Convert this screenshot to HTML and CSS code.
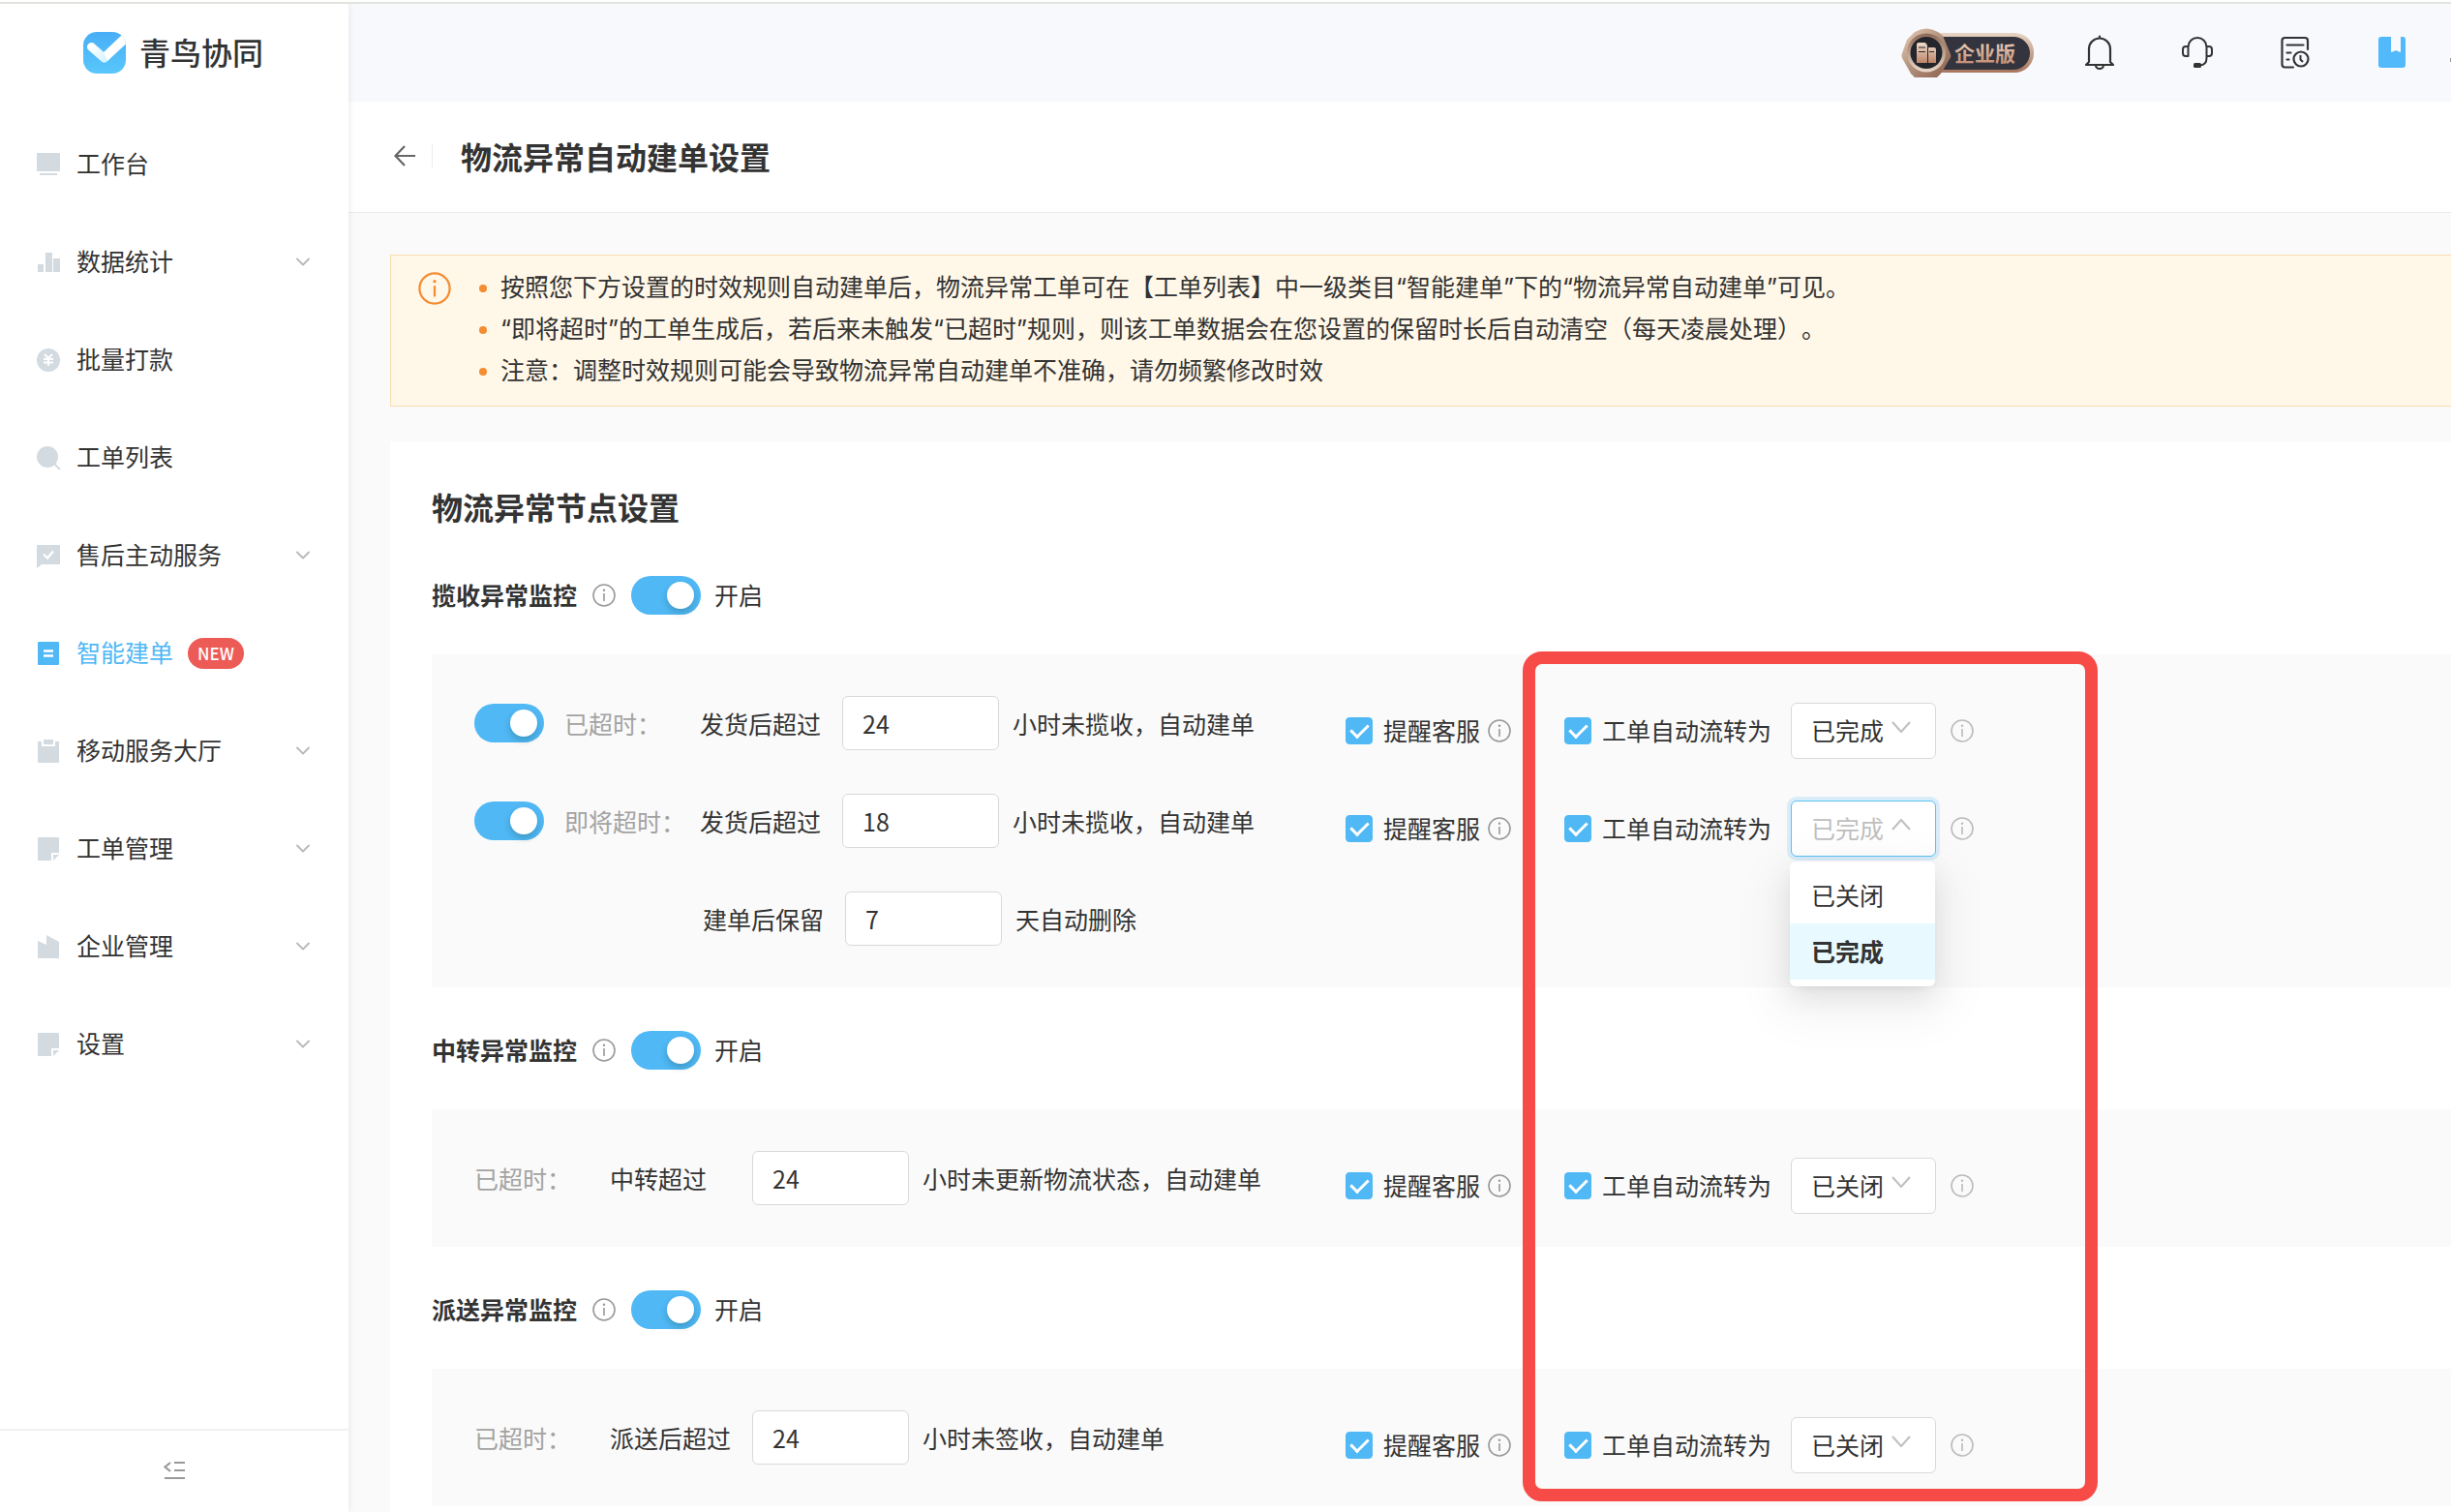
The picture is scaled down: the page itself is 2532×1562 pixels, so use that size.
FILE: index.html
```html
<!DOCTYPE html>
<html lang="zh-CN">
<head>
<meta charset="utf-8">
<meta name="viewport" content="width=device-width, initial-scale=1">
<title>物流异常自动建单设置 - 青鸟协同</title>
<link rel="stylesheet" href="styles.css">
</head>
<body>
<svg class="sprite" aria-hidden="true">
  <symbol id="i-info" viewBox="0 0 24 24">
    <circle cx="12" cy="12" r="11" fill="none" stroke="currentColor" stroke-width="1.6"/>
    <path d="M12 10v8" fill="none" stroke="currentColor" stroke-width="1.6"/>
    <circle cx="12" cy="6.8" r="1.2" fill="currentColor"/>
  </symbol>
  <symbol id="i-down" viewBox="0 0 14 9">
    <path d="M1 1.5l6 6 6-6" fill="none" stroke="currentColor" stroke-width="1.8" stroke-linecap="round" stroke-linejoin="round"/>
  </symbol>
  <symbol id="i-arrow" viewBox="0 0 20 12">
    <path d="M1 1l9 10 9-10" fill="none" stroke="currentColor" stroke-width="2"/>
  </symbol>
  <symbol id="i-note" viewBox="0 0 26 26">
    <path fill="currentColor" d="M3 1h20a1 1 0 0 1 1 1v15h-8v8H3a1 1 0 0 1-1-1V2a1 1 0 0 1 1-1zM18 19h6l-6 6z"/>
  </symbol>
</svg>
<div class="edge"></div>
<div class="app">
  <aside class="sidebar">
    <div class="brand">
      <svg class="brand-mark" viewBox="0 0 44 43" aria-hidden="true">
        <defs>
          <linearGradient id="g-mark" x1="0" y1="0" x2="0" y2="1"><stop offset="0" stop-color="#48aef7"/><stop offset="1" stop-color="#59c7fb"/></linearGradient>
          <linearGradient id="g-tick" gradientUnits="userSpaceOnUse" x1="8" y1="14" x2="24" y2="30"><stop offset="0" stop-color="#fff"/><stop offset="1" stop-color="#d4f2fe"/></linearGradient>
          <clipPath id="c-mark"><rect width="44" height="43" rx="14"/></clipPath>
        </defs>
        <g clip-path="url(#c-mark)">
          <rect width="44" height="43" fill="url(#g-mark)"/>
          <path d="M8.500 15.500L21.500 27l2-2" fill="none" stroke="url(#g-tick)" stroke-width="9" stroke-linecap="round" stroke-linejoin="round"/>
          <path d="M21 21L42 1l8 6-25 23z" fill="#fff"/>
        </g>
      </svg>
      <span class="brand-name">青鸟协同</span>
    </div>
    <nav class="nav">
      <a class="nav-item" href="#"><svg class="nav-icon" viewBox="0 0 26 26"><path fill="currentColor" d="M1 1h24v19H1zM4 22h18v2H4z"/></svg><span>工作台</span></a>
      <a class="nav-item" href="#"><svg class="nav-icon" viewBox="0 0 26 26"><path fill="currentColor" d="M2 15h6v8H2zM10 3h7v20h-7zM18 9h7v14h-7z"/></svg><span>数据统计</span><svg class="nav-chev"><use href="#i-down"/></svg></a>
      <a class="nav-item" href="#"><svg class="nav-icon" viewBox="0 0 26 26"><circle cx="13" cy="13" r="12" fill="currentColor"/><path d="M9 7l4 4 4-4M8 12h10M8 15.500h10M13 11v8" fill="none" stroke="#fff" stroke-width="2"/></svg><span>批量打款</span></a>
      <a class="nav-item" href="#"><svg class="nav-icon" viewBox="0 0 26 26"><circle cx="12" cy="12" r="11" fill="currentColor"/><path d="M18 18l7 7" stroke="currentColor" stroke-width="2"/></svg><span>工单列表</span></a>
      <a class="nav-item" href="#"><svg class="nav-icon" viewBox="0 0 26 26"><path fill="currentColor" d="M1 2h24v20H6l-5 4z"/><path d="M8 11.500l4 4 6-7" fill="none" stroke="#fff" stroke-width="2.400"/></svg><span>售后主动服务</span><svg class="nav-chev"><use href="#i-down"/></svg></a>
      <a class="nav-item is-active" href="#" aria-current="page"><svg class="nav-icon" viewBox="0 0 26 26"><rect x="2" y="1" width="22" height="24" rx="1" fill="currentColor"/><path d="M8 10.500h10M8 15.500h10" stroke="#fff" stroke-width="2.400"/></svg><span>智能建单</span><em class="tag">NEW</em></a>
      <a class="nav-item" href="#"><svg class="nav-icon" viewBox="0 0 26 26"><path fill="currentColor" d="M2 3h4v5h14V3h4v22H2zM8 1h10v5H8z"/></svg><span>移动服务大厅</span><svg class="nav-chev"><use href="#i-down"/></svg></a>
      <a class="nav-item" href="#"><svg class="nav-icon"><use href="#i-note"/></svg><span>工单管理</span><svg class="nav-chev"><use href="#i-down"/></svg></a>
      <a class="nav-item" href="#"><svg class="nav-icon" viewBox="0 0 26 26"><path fill="currentColor" d="M2 7l9 4V1l13 7v17H2z"/></svg><span>企业管理</span><svg class="nav-chev"><use href="#i-down"/></svg></a>
      <a class="nav-item" href="#"><svg class="nav-icon"><use href="#i-note"/></svg><span>设置</span><svg class="nav-chev"><use href="#i-down"/></svg></a>
    </nav>
    <button class="collapse" type="button" aria-label="收起菜单">
      <svg viewBox="0 0 24 20"><path d="M8 2L2.500 6.500 8 11M12 2h11M12 10h11M2 18h21" fill="none" stroke="currentColor" stroke-width="2.200"/></svg>
    </button>
  </aside>

  <div class="main">
    <header class="topbar">
      <a class="edition" href="#" aria-label="企业版">
        <svg viewBox="0 0 138 51">
          <defs>
            <linearGradient id="g-rim" x1="0" y1="0" x2="0" y2="1"><stop offset="0" stop-color="#e6d4c4"/><stop offset="1" stop-color="#a8755c"/></linearGradient>
            <linearGradient id="g-hex" x1="0" y1="0" x2="1" y2="1"><stop offset="0" stop-color="#e8cdb8"/><stop offset=".5" stop-color="#b08f7a"/><stop offset="1" stop-color="#8a5f4a"/></linearGradient>
            <linearGradient id="g-ring" x1="0" y1="0" x2="0" y2="1"><stop offset="0" stop-color="#8d6a57"/><stop offset="1" stop-color="#ead9cb"/></linearGradient>
            <linearGradient id="g-ink" x1="0" y1="0" x2="0" y2="1"><stop offset="0" stop-color="#f0dccb"/><stop offset="1" stop-color="#bd8468"/></linearGradient>
          </defs>
          <rect x="20" y="5" width="117" height="41" rx="20" fill="url(#g-rim)"/>
          <rect x="20" y="9" width="113" height="34" rx="17" fill="#34343e"/>
          <path d="M14 4q12-7 24 0l5 4 8 19q1 3-1 5l-9 15-4 4H14l-4-4L1 31q-1-2 0-5l5-14z" fill="url(#g-hex)"/>
          <circle cx="26" cy="25.500" r="20" fill="url(#g-ring)"/>
          <circle cx="26" cy="25.500" r="16.500" fill="#25252c"/>
          <path d="M16 36V17q0-2 2-2h6q2 0 3 3v18zM28 36V20h6q2 0 2 2v14z" fill="url(#g-ink)"/>
          <path d="M18 20h7M18 24.500h7M29 24.500h5" stroke="#25252c" stroke-width="1.200"/>
          <text class="edition-text" x="55" y="34" fill="url(#g-ink)">企业版</text>
        </svg>
      </a>
      <div class="tools">
        <button class="tool" type="button" aria-label="通知"><svg viewBox="0 0 34 36"><path d="M17 1.500v2M6 28V14.500a11 11 0 0 1 22 0V28l3 3H3zM13 31.500a4 3.500 0 0 0 8 0" fill="none" stroke="currentColor" stroke-width="2.200" stroke-linejoin="round" stroke-linecap="round"/></svg></button>
        <button class="tool" type="button" aria-label="客服"><svg viewBox="0 0 34 36"><path d="M7.500 22V12.500a9.500 9.500 0 0 1 19 0V24q0 7-7 7.500M7.500 12H5q-3 0-3 3v4q0 3 3 3h2.500zM26.500 12H29q3 0 3 3v4q0 3-3 3h-2.500z" fill="none" stroke="currentColor" stroke-width="2" stroke-linejoin="round"/><rect x="13" y="29" width="8" height="5" rx="1.500" fill="currentColor"/></svg></button>
        <button class="tool" type="button" aria-label="工单记录"><svg viewBox="0 0 34 36"><path d="M15 33.500H6.500q-3 0-3-3V6q0-3 3-3H27q3 0 3 3v9M8.500 10.500h17M8.500 18.500h4M8.500 25.500h2" fill="none" stroke="currentColor" stroke-width="2.200" stroke-linecap="round"/><circle cx="23" cy="25" r="7.500" fill="none" stroke="currentColor" stroke-width="2.200"/><path d="M22.500 21v4.500l2.500 2.500" fill="none" stroke="currentColor" stroke-width="2"/></svg></button>
        <button class="tool is-blue" type="button" aria-label="帮助手册"><svg viewBox="0 0 34 36"><path fill="currentColor" d="M5 2h10v16l3-1 2-1 2 1 3 1V2h2q3 0 3 3v26q0 3-3 3H5q-3 0-3-3V5q0-3 3-3z"/></svg></button>
        <button class="tool-cut" type="button" aria-label="账号"><svg viewBox="0 0 10 36"><path d="M9.500 24v4" fill="none" stroke="#999" stroke-width="1"/></svg></button>
      </div>
    </header>

    <div class="page-head">
      <a class="back" href="#" aria-label="返回"><svg viewBox="0 0 24 24"><path d="M12 2L2.500 12l9.500 10M2.500 12H23" fill="none" stroke="currentColor" stroke-width="2.200"/></svg></a>
      <h1 class="title">物流异常自动建单设置</h1>
    </div>

    <main class="content">
      <div class="alert" role="note">
        <svg class="alert-icon"><use href="#i-info"/></svg>
        <ul class="alert-list">
          <li>按照您下方设置的时效规则自动建单后，物流异常工单可在【工单列表】中一级类目“智能建单”下的“物流异常自动建单”可见。</li>
          <li>“即将超时”的工单生成后，若后来未触发“已超时”规则，则该工单数据会在您设置的保留时长后自动清空（每天凌晨处理）。</li>
          <li>注意：调整时效规则可能会导致物流异常自动建单不准确，请勿频繁修改时效</li>
        </ul>
      </div>

      <section class="card">
        <h2 class="card-title">物流异常节点设置</h2>

        <div class="group-head">
          <strong>揽收异常监控</strong>
          <svg class="info"><use href="#i-info"/></svg>
          <input class="switch" type="checkbox" role="switch" id="sw-collect" checked>
          <label for="sw-collect">开启</label>
        </div>
        <div class="panel">
          <div class="row">
            <div class="rule">
              <input class="switch" type="checkbox" role="switch" id="sw-c1" checked>
              <label class="state" for="sw-c1">已超时：</label>
              <label class="lead" for="h-c1">发货后超过</label>
              <input class="num" type="text" id="h-c1" value="24">
              <span>小时未揽收，自动建单</span>
            </div>
            <div class="opt"><input class="check" type="checkbox" id="r-c1" checked><label for="r-c1">提醒客服</label><svg class="info"><use href="#i-info"/></svg></div>
            <div class="opt"><input class="check" type="checkbox" id="f-c1" checked><label for="f-c1">工单自动流转为</label>
              <div class="picker"><select aria-label="流转状态"><option>已关闭</option><option selected>已完成</option></select><svg class="picker-arrow"><use href="#i-arrow"/></svg></div>
              <svg class="info is-light"><use href="#i-info"/></svg></div>
          </div>
          <div class="row">
            <div class="rule">
              <input class="switch" type="checkbox" role="switch" id="sw-c2" checked>
              <label class="state" for="sw-c2">即将超时：</label>
              <label class="lead" for="h-c2">发货后超过</label>
              <input class="num" type="text" id="h-c2" value="18">
              <span>小时未揽收，自动建单</span>
            </div>
            <div class="opt"><input class="check" type="checkbox" id="r-c2" checked><label for="r-c2">提醒客服</label><svg class="info"><use href="#i-info"/></svg></div>
            <div class="opt"><input class="check" type="checkbox" id="f-c2" checked><label for="f-c2">工单自动流转为</label>
              <div class="picker is-open"><select aria-label="流转状态"><option>已关闭</option><option selected>已完成</option></select><svg class="picker-arrow"><use href="#i-arrow"/></svg>
                <ul class="menu" role="listbox"><li role="option">已关闭</li><li role="option" aria-selected="true">已完成</li></ul>
              </div>
              <svg class="info is-light"><use href="#i-info"/></svg></div>
          </div>
          <div class="row">
            <div class="rule is-sub">
              <label class="lead" for="d-c3">建单后保留</label>
              <input class="num" type="text" id="d-c3" value="7">
              <span>天自动删除</span>
            </div>
          </div>
        </div>

        <div class="group-head">
          <strong>中转异常监控</strong>
          <svg class="info"><use href="#i-info"/></svg>
          <input class="switch" type="checkbox" role="switch" id="sw-transit" checked>
          <label for="sw-transit">开启</label>
        </div>
        <div class="panel">
          <div class="row">
            <div class="rule">
              <span class="state">已超时：</span>
              <label class="lead" for="h-t1">中转超过</label>
              <input class="num" type="text" id="h-t1" value="24">
              <span>小时未更新物流状态，自动建单</span>
            </div>
            <div class="opt"><input class="check" type="checkbox" id="r-t1" checked><label for="r-t1">提醒客服</label><svg class="info"><use href="#i-info"/></svg></div>
            <div class="opt"><input class="check" type="checkbox" id="f-t1" checked><label for="f-t1">工单自动流转为</label>
              <div class="picker"><select aria-label="流转状态"><option selected>已关闭</option><option>已完成</option></select><svg class="picker-arrow"><use href="#i-arrow"/></svg></div>
              <svg class="info is-light"><use href="#i-info"/></svg></div>
          </div>
        </div>

        <div class="group-head">
          <strong>派送异常监控</strong>
          <svg class="info"><use href="#i-info"/></svg>
          <input class="switch" type="checkbox" role="switch" id="sw-deliver" checked>
          <label for="sw-deliver">开启</label>
        </div>
        <div class="panel">
          <div class="row">
            <div class="rule">
              <span class="state">已超时：</span>
              <label class="lead" for="h-d1">派送后超过</label>
              <input class="num" type="text" id="h-d1" value="24">
              <span>小时未签收，自动建单</span>
            </div>
            <div class="opt"><input class="check" type="checkbox" id="r-d1" checked><label for="r-d1">提醒客服</label><svg class="info"><use href="#i-info"/></svg></div>
            <div class="opt"><input class="check" type="checkbox" id="f-d1" checked><label for="f-d1">工单自动流转为</label>
              <div class="picker"><select aria-label="流转状态"><option selected>已关闭</option><option>已完成</option></select><svg class="picker-arrow"><use href="#i-arrow"/></svg></div>
              <svg class="info is-light"><use href="#i-info"/></svg></div>
          </div>
        </div>

        <div class="highlight" aria-hidden="true"></div>
      </section>
    </main>
  </div>
</div>
</body>
</html>
```

FILE: styles.css
```css
* { box-sizing: border-box; }

body {
  margin: 0;
  display: flex;
  flex-direction: column;
  min-height: 100vh;
  overflow-x: hidden;
  font-family: "Noto Sans CJK SC", sans-serif;
  font-size: 25px;
  line-height: 36px;
  color: #333;
  background: #fff;
  text-spacing-trim: space-all;
}

input, select, button { font: inherit; color: inherit; margin: 0; }
button { border: 0; background: none; padding: 0; }
a { color: inherit; text-decoration: none; }
ul { list-style: none; margin: 0; padding: 0; }
svg { display: block; flex: none; }
.sprite { position: absolute; width: 0; height: 0; }

.edge { height: 4px; border-bottom: 2px solid #e2e3de; }

.app {
  flex: 1;
  display: grid;
  grid-template-columns: 360px minmax(0, 1fr);
}

/* Sidebar */
.sidebar {
  display: flex;
  flex-direction: column;
  background: #fff;
  box-shadow: 0 0 8px rgba(0, 0, 0, .09);
  clip-path: inset(0 -10px 0 0);
  z-index: 1;
}
.brand {
  display: flex;
  align-items: center;
  gap: 14px;
  height: 101px;
  padding-left: 86px;
}
.brand-mark { width: 44px; height: 43px; }
.brand-name { padding-bottom: 4px; font-size: 32px; font-weight: 500; }

.nav { padding-top: 14px; }
.nav-item {
  display: flex;
  align-items: center;
  height: 101px;
  padding: 0 40px 0 37px;
}
.nav-item span { padding-bottom: 4px; }
.nav-icon { width: 26px; height: 26px; margin-right: 16px; color: #d3dae0; }
.nav-chev { width: 14px; height: 9px; margin-left: auto; color: #b8b8b8; }
.nav-item.is-active, .is-active .nav-icon { color: #4fb8f5; }
.tag {
  margin-left: 15px;
  padding: 0 10px;
  border-radius: 17px;
  background: #ed5b56;
  color: #fff;
  font-size: 17px;
  font-style: normal;
  font-weight: 500;
  line-height: 32px;
}
.collapse {
  display: flex;
  align-items: center;
  justify-content: center;
  height: 86px;
  padding-bottom: 2px;
  margin-top: auto;
  border-top: 2px solid #f0f0f0;
  color: #999;
}
.collapse svg { width: 24px; height: 20px; }

/* Main column */
.main { display: flex; flex-direction: column; min-width: 0; }
.topbar {
  display: flex;
  align-items: center;
  justify-content: flex-end;
  gap: 16px;
  height: 101px;
  background: #f7f9fd;
}
.edition svg { width: 138px; height: 51px; }
.edition-text { font-size: 21px; font-weight: 700; }
.tools { display: flex; align-items: center; padding-bottom: 2px; }
.tool { display: flex; justify-content: center; width: 101px; color: #333; }
.tool svg { width: 34px; height: 36px; }
.tool.is-blue { color: #52b9fb; }
.tool-cut svg { width: 10px; height: 36px; }

.page-head {
  display: flex;
  align-items: center;
  height: 115px;
  padding: 0 0 3px 46px;
  border-bottom: 1px solid #ebebeb;
}
.back {
  padding-right: 16px;
  margin-right: 29px;
  border-right: 1px solid #ececec;
  color: #666;
}
.back svg { width: 24px; height: 24px; }
.title { margin: 0; font-size: 32px; font-weight: 700; line-height: 48px; }

.content {
  flex: 1;
  display: flex;
  flex-direction: column;
  gap: 36px;
  padding: 43px 0 0 43px;
  background: #fafafa;
}

.alert {
  display: flex;
  gap: 29px;
  padding: 12px 0 14px 28px;
  border: 1px solid #f9dcae;
  border-right: 0;
  background: #fff7e8;
}
.alert-icon { width: 34px; height: 34px; margin-top: 5px; color: #f48c31; }
.alert-list { font-family: Inter, "Noto Sans CJK SC", sans-serif; line-height: 43px; }
.alert-list li { display: flex; align-items: center; gap: 14px; }
.alert-list li::before {
  content: "";
  width: 8px;
  height: 8px;
  border-radius: 50%;
  background: #f48c31;
}

/* Settings card */
.card {
  position: relative;
  flex: 1;
  padding: 42px 0 0 43px;
  background: #fff;
}
.card-title { margin: 0; padding-bottom: 2px; font-size: 32px; font-weight: 700; line-height: 50px; }
.group-head {
  display: flex;
  align-items: center;
  gap: 16px;
  height: 126px;
  padding-top: 4px;
}
.group-head strong, .group-head label { padding-bottom: 2px; }
.group-head .switch { margin-right: -2px; }
.info { width: 24px; height: 24px; color: #999; }
.info.is-light { color: #bbb; }

.switch {
  appearance: none;
  flex: none;
  width: 72px;
  height: 40px;
  padding: 6px 7px;
  border-radius: 20px;
  background: #bfbfbf;
}
.switch::before {
  content: "";
  display: block;
  width: 28px;
  height: 28px;
  border-radius: 50%;
  background: #fff;
  box-shadow: 0 4px 7px rgba(0, 35, 11, .2);
}
.switch:checked { background: #4fb8f5; }
.switch:checked::before { margin-left: auto; }

.panel { padding: 22px 0 19px 44px; background: #fafafa; }
.row {
  display: grid;
  grid-template-columns: 900px 226px auto;
  justify-content: start;
  height: 101px;
}
.rule { display: flex; align-items: center; padding-bottom: 3px; }
.rule .switch { margin-right: 21px; }
.rule.is-sub { padding-left: 236px; }
.state { width: 140px; color: #a3a3a3; }
.lead { width: 147px; }
.num {
  width: 162px;
  height: 56px;
  margin-right: 14px;
  padding: 0 20px;
  border: 1px solid #d9d9d9;
  border-radius: 6px;
  background: #fff;
}

.opt { display: flex; align-items: center; padding-top: 13px; }
.opt label { padding-bottom: 2px; }
.opt .info { margin-left: 8px; }
.check {
  appearance: none;
  display: grid;
  place-items: center;
  width: 28px;
  height: 28px;
  margin-right: 11px;
  border: 1px solid #d9d9d9;
  border-radius: 4px;
  background: #fff;
}
.check:checked { border-color: #4fb8f5; background: #4fb8f5; }
.check:checked::before {
  content: "";
  width: 8px;
  height: 15px;
  margin-bottom: 4px;
  border: solid #fff;
  border-width: 0 3px 3px 0;
  rotate: 45deg;
}

.picker { position: relative; margin: 0 7px 0 20px; }
.picker select {
  appearance: none;
  display: block;
  width: 150px;
  height: 58px;
  padding: 0 0 3px 20px;
  border: 1px solid #d9d9d9;
  border-radius: 6px;
  background: #fff;
}
.picker-arrow {
  position: absolute;
  top: 19px;
  right: 26px;
  width: 20px;
  height: 12px;
  color: #bfbfbf;
  pointer-events: none;
}
.picker.is-open select {
  border-color: #5cc0f5;
  box-shadow: 0 0 0 4px rgba(79, 184, 245, .2);
  color: #bfbfbf;
}
.is-open .picker-arrow { rotate: 180deg; }
.menu {
  position: absolute;
  top: 63px;
  left: -1px;
  z-index: 2;
  width: 150px;
  padding: 6px 0 7px;
  border-radius: 6px;
  background: #fff;
  box-shadow: 0 5px 11px -7px rgba(0, 0, 0, .12), 0 11px 29px rgba(0, 0, 0, .08), 0 16px 50px 14px rgba(0, 0, 0, .05);
}
.menu li { padding: 0 22px 2px; line-height: 56px; }
.menu li[aria-selected="true"] { background: #e8faff; font-weight: 700; }

/* Marker drawn over the auto-transition column */
.highlight {
  position: absolute;
  top: 217px;
  left: 1170px;
  width: 594px;
  height: 878px;
  border: 13px solid #f74b47;
  border-radius: 20px;
  pointer-events: none;
}
```
